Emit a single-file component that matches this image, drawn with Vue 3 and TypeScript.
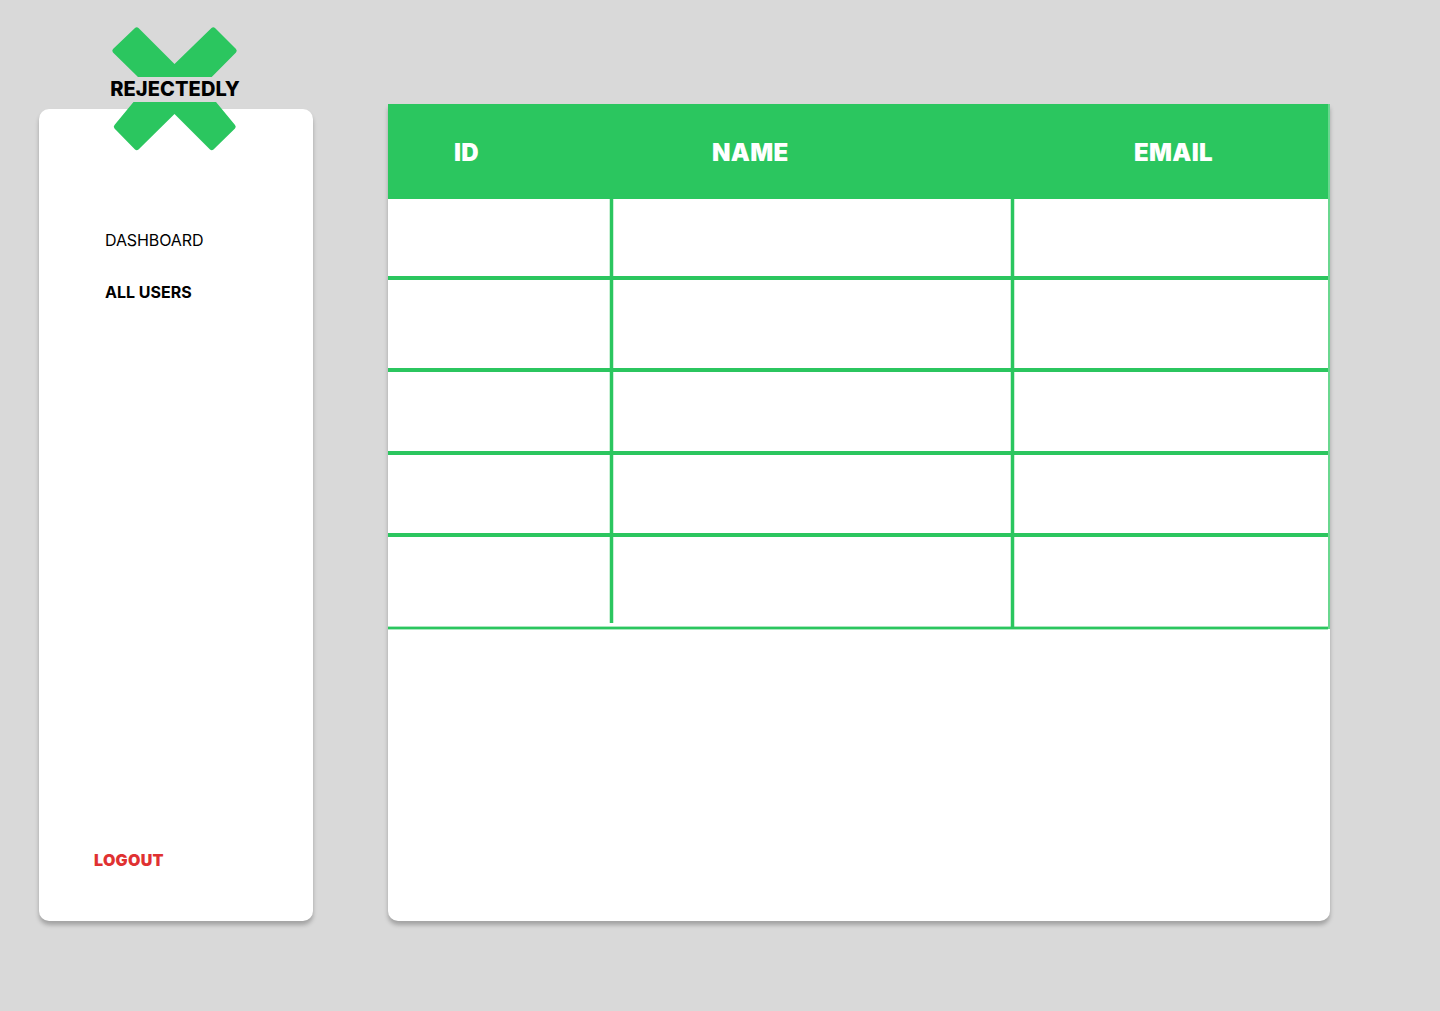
<script setup lang="ts">
const rowHeights = [77, 88, 79, 78, 90]
</script>

<template>
  <div class="page">
    <aside class="sidebar">
      <div class="logo">
        <svg class="logo_part" width="130" height="51" viewBox="110 26 130 51">
          <path d="M135 28Q136.7 26.5 138.5 28L174.5 64 211.5 28Q213.3 26.5 215 28L236 49Q237.5 50.7 236 52.5L211.7 77 138 77 113 52.5Q111.5 50.7 113 49Z" fill="#2bc65f" />
        </svg>
        <div class="logo_text">REJECTEDLY</div>
        <svg class="logo_part" width="130" height="49" viewBox="110 102 130 49">
          <path d="M133.5 102 216 102 235 125Q236.5 126.7 235 128.5L213.5 149.5Q211.7 151 210 149.5L174.5 114 138.5 149.5Q136.7 151 135 149.5L114.5 128.5Q113 126.7 114.5 125Z" fill="#2bc65f" />
        </svg>
      </div>
      <nav class="nav">
        <a class="nav_item">DASHBOARD</a>
        <a class="nav_item active">ALL USERS</a>
      </nav>
      <a class="logout">LOGOUT</a>
    </aside>

    <main class="panel">
      <div class="table">
        <div class="head">
          <div class="th th_id">ID</div>
          <div class="th th_name">NAME</div>
          <div class="th th_email">EMAIL</div>
        </div>
        <div v-for="(h, i) in rowHeights" :key="i" class="row" :style="{ height: h + 'px' }">
          <div class="cell cell_id" :class="{ short: i === rowHeights.length - 1 }"></div>
          <div class="cell cell_name"></div>
          <div class="cell cell_email"></div>
        </div>
      </div>
    </main>
  </div>
</template>

<style>
body {
  background: #d9d9d9;
}
</style>

<style scoped>
.page {
  display: flex;
  align-items: flex-start;
  gap: 75px;
  height: 1011px;
  padding: 104px 0 0 39px;
  box-sizing: border-box;
  background: #d9d9d9;
  font-family: Inter, "Liberation Sans", sans-serif;
  color: #000;
}

.sidebar {
  position: relative;
  display: flex;
  flex-direction: column;
  width: 274px;
  height: 812px;
  margin-top: 5px;
  padding: 121px 0 51px;
  box-sizing: border-box;
  background: #fff;
  border-radius: 10px;
  box-shadow: 0 4px 4px rgba(0, 0, 0, 0.25);
}

.logo {
  position: absolute;
  top: -83px;
  left: 71px;
  width: 130px;
  display: flex;
  flex-direction: column;
}

.logo_part {
  display: block;
}

.logo_text {
  height: 25px;
  line-height: 25px;
  font-size: 20px;
  font-weight: 800;
  letter-spacing: 0.1px;
  text-align: center;
  white-space: nowrap;
}

.nav {
  display: flex;
  flex-direction: column;
  gap: 32px;
  padding-left: 66px;
}

.nav_item {
  line-height: 20px;
  font-size: 16px;
  font-weight: 400;
  letter-spacing: -0.1px;
}

.nav_item.active {
  font-weight: 700;
  letter-spacing: 0;
}

.logout {
  margin-top: auto;
  margin-left: 55px;
  line-height: 20px;
  font-size: 16px;
  font-weight: 900;
  letter-spacing: 0.3px;
  color: #e03131;
}

.panel {
  width: 942px;
  height: 817px;
  background: #fff;
  border-radius: 0 0 10px 10px;
  box-shadow: 0 4px 4px rgba(0, 0, 0, 0.25);
}

.table {
  width: 942px;
  box-sizing: border-box;
  border-right: 2px solid rgba(43, 198, 95, 0.7);
}

.head {
  display: flex;
  height: 95px;
  padding-top: 2px;
  box-sizing: border-box;
  align-items: center;
  background: #2bc65f;
}

.th {
  font-size: 24px;
  font-weight: 900;
  letter-spacing: 0.3px;
  color: #fff;
  box-sizing: border-box;
}

.th_id {
  width: 225px;
  padding-left: 66px;
}

.th_name {
  width: 401px;
  padding-left: 99px;
}

.th_email {
  padding-left: 120px;
}

.row {
  display: flex;
  box-sizing: content-box;
  border-bottom: 4px solid #2bc65f;
}

.row:last-child {
  border-bottom-width: 2px;
  box-shadow: 0 1px 0 rgba(43, 198, 95, 0.4), inset 0 -1px 0 rgba(43, 198, 95, 0.4);
}

.cell {
  box-sizing: border-box;
}

.cell_id {
  width: 225px;
  border-right: 3px solid #2bc65f;
  box-shadow: 1px 0 0 rgba(43, 198, 95, 0.25), inset -1px 0 0 rgba(43, 198, 95, 0.25);
}

.cell_id.short {
  height: 86px;
}

.cell_name {
  width: 401px;
  border-right: 3px solid #2bc65f;
  box-shadow: 1px 0 0 rgba(43, 198, 95, 0.25), inset -1px 0 0 rgba(43, 198, 95, 0.25);
}

.cell_email {
  flex: 1;
}
</style>
